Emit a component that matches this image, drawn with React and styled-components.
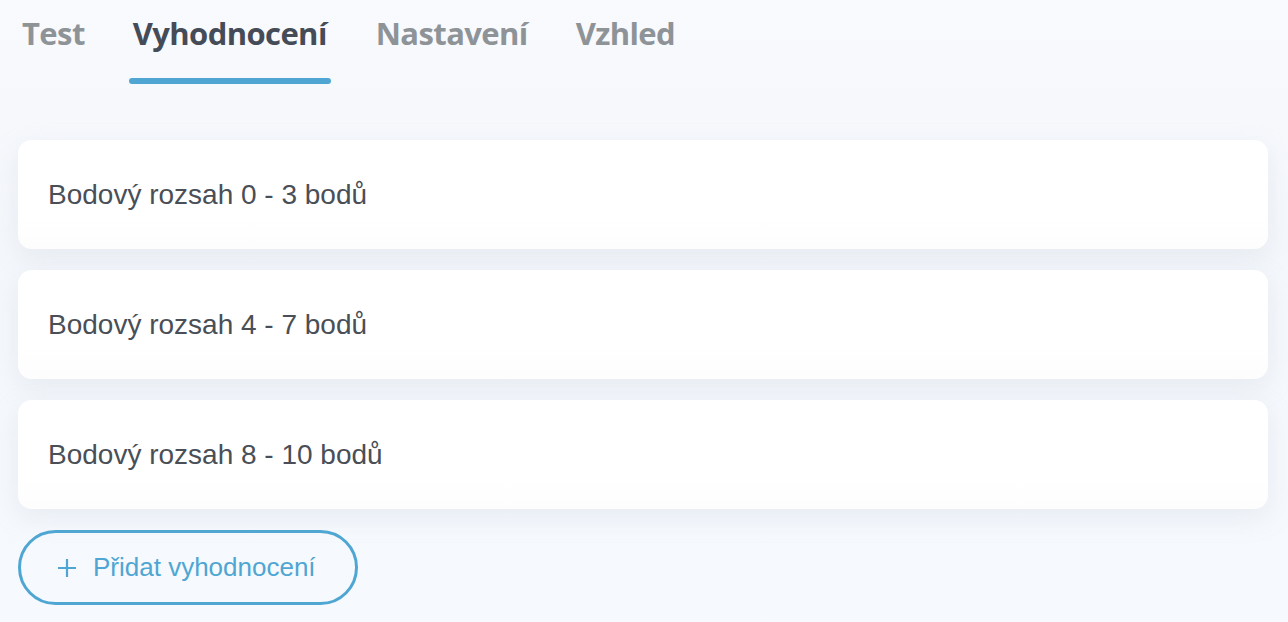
import React from "react";
import styled, { createGlobalStyle } from "styled-components";

const Global = createGlobalStyle`
  html, body { margin: 0; padding: 0; }
  body {
    background: linear-gradient(180deg, #f8fafd 0%, #f4f7fb 40%, #f6f9fd 100%);
    font-family: "Liberation Sans", Arial, sans-serif;
    width: 1288px;
    height: 622px;
    overflow: hidden;
  }
`;

const Page = styled.div`
  display: flex;
  flex-direction: column;
  padding: 0 20px 0 18px;
`;

const TabBar = styled.nav`
  display: flex;
  padding-left: 4px;
  height: 86px;
  margin-bottom: 54px;
`;

const Tab = styled.div`
  position: relative;
  padding: 12px 0 0;
  margin-right: ${(p) => p.$mr}px;
  font-family: "Open Sans", sans-serif;
  font-weight: 700;
  font-size: 31px;
  letter-spacing: -0.6px;
  line-height: 42px;
  color: ${(p) => (p.$active ? "#454c57" : "#8e9398")};
  &::after {
    content: "";
    display: ${(p) => (p.$active ? "block" : "none")};
    position: absolute;
    left: -4px;
    right: -4px;
    top: 78px;
    height: 6px;
    border-radius: 3px;
    background: #4fa6d3;
  }
`;

const List = styled.div`
  display: flex;
  flex-direction: column;
  gap: 21px;
`;

const Card = styled.div`
  height: 109px;
  border-radius: 14px;
  background: linear-gradient(180deg, #ffffff 70%, #fdfdfe 100%);
  box-shadow: 0 8px 24px rgba(190, 200, 215, 0.25);
  display: flex;
  align-items: center;
  padding-left: 30px;
  font-size: 28px;
  color: #4a4f57;
`;

const AddButton = styled.button`
  margin-top: 21px;
  align-self: flex-start;
  width: 340px;
  height: 75px;
  border: 3px solid #4fa6d3;
  border-radius: 38px;
  background: transparent;
  display: flex;
  align-items: center;
  gap: 16px;
  padding: 0 0 0 36px;
  color: #4fa6d3;
  font-family: "Liberation Sans", Arial, sans-serif;
  font-size: 26px;
  cursor: pointer;
`;

const tabs = [
  { label: "Test", mr: 48 },
  { label: "Vyhodnocení", mr: 49 },
  { label: "Nastavení", mr: 48 },
  { label: "Vzhled", mr: 0 },
];

export default function App() {
  return (
    <>
      <Global />
      <Page>
        <TabBar>
          {tabs.map((t, i) => (
            <Tab key={t.label} $active={i === 1} $mr={t.mr}>
              {t.label}
            </Tab>
          ))}
        </TabBar>
        <List>
          <Card>Bodový rozsah 0 - 3 bodů</Card>
          <Card>Bodový rozsah 4 - 7 bodů</Card>
          <Card>Bodový rozsah 8 - 10 bodů</Card>
        </List>
        <AddButton>
          <svg width="20" height="20" viewBox="0 0 20 20" fill="none">
            <path d="M10 1v18M1 10h18" stroke="#4fa6d3" strokeWidth="2.2" />
          </svg>
          Přidat vyhodnocení
        </AddButton>
      </Page>
    </>
  );
}
